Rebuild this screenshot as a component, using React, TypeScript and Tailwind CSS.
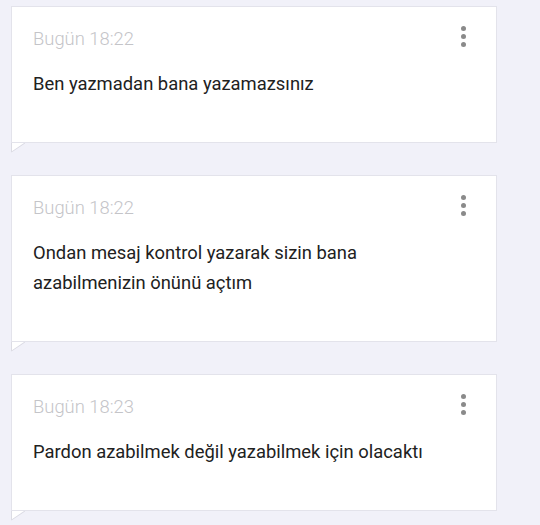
import React from 'react';

interface Message {
  time: string;
  text: string;
}

const messages: Message[] = [
  { time: 'Bugün 18:22', text: 'Ben yazmadan bana yazamazsınız' },
  { time: 'Bugün 18:22', text: 'Ondan mesaj kontrol yazarak sizin bana azabilmenizin önünü açtım' },
  { time: 'Bugün 18:23', text: 'Pardon azabilmek değil yazabilmek için olacaktı' },
];

function MessageCard({ time, text }: Message) {
  return (
    <div className="flex flex-col">
      <div className="relative bg-white border border-[#e3e3eb] pl-[21px] pr-[70px] pt-[20px] pb-[43px]">
        <div className="text-[18.4px] leading-[24px] font-light text-[#c4c4c8]">{time}</div>
        <div className="mt-[18px] text-[18.4px] leading-[30px] text-[#212121]">{text}</div>
        <div className="absolute top-[19px] right-[30px] flex flex-col gap-[3px]">
          <span className="w-[5px] h-[5px] rounded-full bg-[#8a8a8a]" />
          <span className="w-[5px] h-[5px] rounded-full bg-[#8a8a8a]" />
          <span className="w-[5px] h-[5px] rounded-full bg-[#8a8a8a]" />
        </div>
      </div>
      <svg width="16" height="11" viewBox="0 0 16 11" className="-mt-px block">
        <polygon points="0.5,0 14,0 0.5,10" fill="#ffffff" />
        <polyline points="0.5,0 0.5,10 14,1" fill="none" stroke="#dcdce4" strokeWidth="1" />
      </svg>
    </div>
  );
}

export default function App() {
  return (
    <div
      className="min-h-[525px] bg-[#f1f1f9] pl-[11px] pr-[43px] pt-[6px] flex flex-col gap-[22px]"
      style={{ fontFamily: 'Roboto, "Noto Sans", sans-serif' }}
    >
      {messages.map((m, i) => (
        <MessageCard key={i} {...m} />
      ))}
    </div>
  );
}
